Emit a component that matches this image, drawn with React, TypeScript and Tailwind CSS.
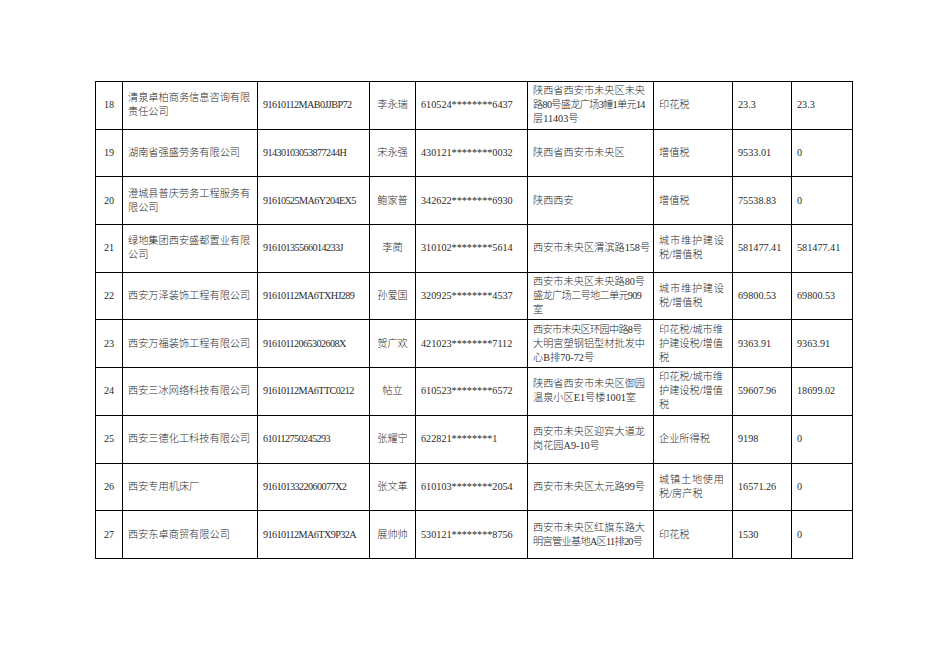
type Row = {
  no: string;
  company: string[];
  code: string;
  name: string;
  id: string;
  addr: string[];
  tight?: number[];
  tax: string[];
  justifyFirst?: boolean;
  amount: string;
  paid: string;
};

const rows: Row[] = [
  {
    no: "18",
    company: ["清泉卓柏商务信息咨询有限", "责任公司"],
    code: "91610112MAB0JJBP72",
    name: "李永瑞",
    id: "610524********6437",
    addr: ["陕西省西安市未央区未央", "路80号盛龙广场3幢1单元14", "层11403号"],
    tight: [1],
    tax: ["印花税"],
    amount: "23.3",
    paid: "23.3",
  },
  {
    no: "19",
    company: ["湖南省强盛劳务有限公司"],
    code: "91430103053877244H",
    name: "宋永强",
    id: "430121********0032",
    addr: ["陕西省西安市未央区"],
    tax: ["增值税"],
    amount: "9533.01",
    paid: "0",
  },
  {
    no: "20",
    company: ["澄城县普庆劳务工程服务有", "限公司"],
    code: "91610525MA6Y204EX5",
    name: "鲍家普",
    id: "342622********6930",
    addr: ["陕西西安"],
    tax: ["增值税"],
    amount: "75538.83",
    paid: "0",
  },
  {
    no: "21",
    company: ["绿地集团西安盛都置业有限", "公司"],
    code: "91610135566014233J",
    name: "李蔺",
    id: "310102********5614",
    addr: ["西安市未央区渭滨路158号"],
    tax: ["城市维护建设", "税/增值税"],
    justifyFirst: true,
    amount: "581477.41",
    paid: "581477.41",
  },
  {
    no: "22",
    company: ["西安万泽装饰工程有限公司"],
    code: "91610112MA6TXHJ289",
    name: "孙爱国",
    id: "320925********4537",
    addr: ["西安市未央区未央路80号", "盛龙广场二号地二单元909", "室"],
    tight: [1],
    tax: ["城市维护建设", "税/增值税"],
    justifyFirst: true,
    amount: "69800.53",
    paid: "69800.53",
  },
  {
    no: "23",
    company: ["西安万福装饰工程有限公司"],
    code: "91610112065302608X",
    name: "贺广欢",
    id: "421023********7112",
    addr: ["西安市未央区环园中路8号", "大明宫塑钢铝型材批发中", "心B排70-72号"],
    tight: [0],
    tax: ["印花税/城市维", "护建设税/增值", "税"],
    amount: "9363.91",
    paid: "9363.91",
  },
  {
    no: "24",
    company: ["西安三冰网络科技有限公司"],
    code: "91610112MA6TTC0212",
    name: "帖立",
    id: "610523********6572",
    addr: ["陕西省西安市未央区御园", "温泉小区E1号楼1001室"],
    tax: ["印花税/城市维", "护建设税/增值", "税"],
    amount: "59607.96",
    paid: "18699.02",
  },
  {
    no: "25",
    company: ["西安三德化工科技有限公司"],
    code: "610112750245293",
    name: "张耀宁",
    id: "622821********1",
    addr: ["西安市未央区迎宾大道龙", "岗花园A9-10号"],
    tax: ["企业所得税"],
    amount: "9198",
    paid: "0",
  },
  {
    no: "26",
    company: ["西安专用机床厂"],
    code: "9161013322060077X2",
    name: "张文革",
    id: "610103********2054",
    addr: ["西安市未央区太元路99号"],
    tax: ["城镇土地使用", "税/房产税"],
    justifyFirst: true,
    amount: "16571.26",
    paid: "0",
  },
  {
    no: "27",
    company: ["西安东卓商贸有限公司"],
    code: "91610112MA6TX9P32A",
    name: "展帅帅",
    id: "530121********8756",
    addr: ["西安市未央区红旗东路大", "明宫管业基地A区11排20号"],
    tight: [1],
    tax: ["印花税"],
    amount: "1530",
    paid: "0",
  },
];

const cell =
  "border border-black align-middle px-[5px] leading-[14px] whitespace-nowrap overflow-hidden";

export default function App() {
  return (
    <div className="min-h-[662px] w-[936px] bg-white pt-[81px] pl-[95px]">
      <table
        className="w-[757px] table-fixed border-collapse text-[10.2px] font-light text-[#2a2a2a]"
        style={{ fontFamily: '"Liberation Serif", "Noto Sans CJK SC", serif' }}
      >
        <colgroup>
          <col className="w-[27px]" />
          <col className="w-[135px]" />
          <col className="w-[112px]" />
          <col className="w-[46px]" />
          <col className="w-[112px]" />
          <col className="w-[126px]" />
          <col className="w-[79px]" />
          <col className="w-[59px]" />
          <col className="w-[61px]" />
        </colgroup>
        <tbody>
          {rows.map((r) => (
            <tr key={r.no} className="h-[47.7px]">
              <td className={`${cell} text-center px-0`}>{r.no}</td>
              <td className={cell}>
                {r.company.map((l, i) => (
                  <div key={i}>{l}</div>
                ))}
              </td>
              <td className={`${cell} tracking-[-0.6px]`}>{r.code}</td>
              <td className={`${cell} text-center px-0`}>{r.name}</td>
              <td className={cell}>{r.id}</td>
              <td className={`${cell} px-[4px]`}>
                {r.addr.map((l, i) => (
                  <div key={i} className={r.tight?.includes(i) ? "tracking-[-0.7px]" : ""}>
                    {l}
                  </div>
                ))}
              </td>
              <td className={cell}>
                {r.tax.map((t, i) => (
                  <div
                    key={i}
                    className={
                      i === 0 && r.justifyFirst
                        ? "text-justify [text-align-last:justify] pr-[3px]"
                        : ""
                    }
                  >
                    {t}
                  </div>
                ))}
              </td>
              <td className={cell}>{r.amount}</td>
              <td className={cell}>{r.paid}</td>
            </tr>
          ))}
        </tbody>
      </table>
    </div>
  );
}
